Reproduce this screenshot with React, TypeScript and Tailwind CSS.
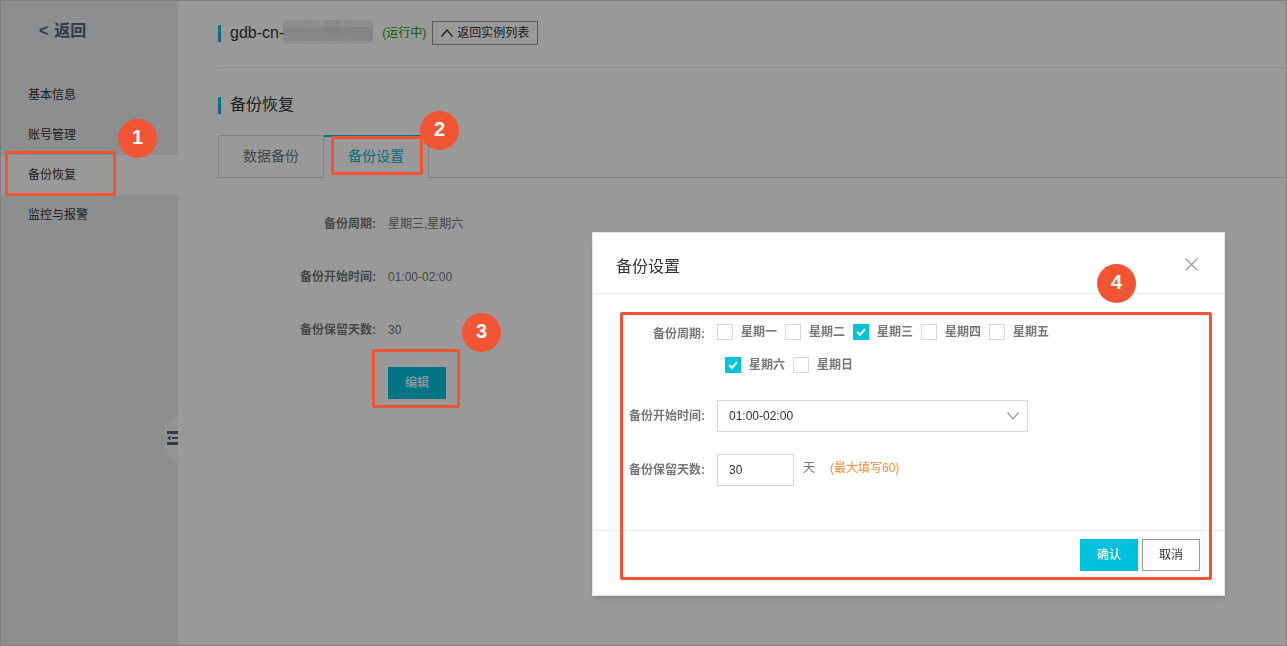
import { useState } from "react";
import type { ReactNode } from "react";

type NavItem = {
  label: string;
  active?: boolean;
};

type DetailRow = {
  label: string;
  value: string;
};

const NAV_ITEMS: NavItem[] = [
  { label: "基本信息" },
  { label: "账号管理" },
  { label: "备份恢复", active: true },
  { label: "监控与报警" },
];

const WEEK_DAYS = ["星期一", "星期二", "星期三", "星期四", "星期五", "星期六", "星期日"];

const TIME_SLOTS = ["00:00-01:00", "01:00-02:00", "02:00-03:00", "03:00-04:00"];

const DETAILS: DetailRow[] = [
  { label: "备份周期:", value: "星期三,星期六" },
  { label: "备份开始时间:", value: "01:00-02:00" },
  { label: "备份保留天数:", value: "30" },
];

// darkness of each cell in the masked instance id
const MASK_ROWS = [
  [10, 12, 12, 11, 11, 10, 13, 14, 11, 11, 10, 10, 10],
  [16, 18, 18, 17, 17, 17, 20, 21, 18, 19, 18, 18, 18],
  [15, 16, 16, 15, 15, 16, 17, 17, 16, 16, 17, 17, 17],
  [6, 7, 7, 6, 6, 6, 7, 7, 6, 6, 5, 5, 5],
];

function Step({ n, className }: { n: number; className: string }) {
  return (
    <span
      className={`absolute z-20 flex h-[39px] w-[39px] items-center justify-center rounded-full bg-[#f25533] pb-1 text-xl leading-5 font-bold text-white ${className}`}
    >
      {n}
    </span>
  );
}

function Frame({ className }: { className: string }) {
  return (
    <span
      className={`pointer-events-none absolute z-20 rounded-xs border-3 border-[#f25533] ${className}`}
    />
  );
}

function Heading({ children }: { children: ReactNode }) {
  return (
    <div className="flex items-center gap-[9px]">
      <span className="h-[17px] w-[3px] bg-linear-to-b from-[#00c1de] from-50% to-[#2aa8e8] to-60%" />
      <h2 className="text-base leading-6 text-[#333]">{children}</h2>
    </div>
  );
}

function MaskedId() {
  return (
    <svg width="90" height="24" viewBox="0 0 90 24" shapeRendering="crispEdges" className="-mt-[2px] -ml-px">
      {MASK_ROWS.map((row, y) =>
        row.map((value, x) => (
          <rect key={`${x}-${y}`} x={x * 7} y={y * 7} width="7" height="7" fill="#1a2424" opacity={value / 120} />
        ))
      )}
    </svg>
  );
}

function Sidebar() {
  return (
    <aside className="relative w-[177px] shrink-0 bg-[#eaedf1]">
      <a href="#" className="mt-[18px] ml-[38px] flex gap-[6px] text-base leading-6 font-bold text-[#546478]">
        <span>&lt;</span>返回
      </a>

      <nav className="mt-8">
        {NAV_ITEMS.map((item) => (
          <div key={item.label} className="relative">
            <a
              href="#"
              className={`block h-10 pl-[27px] text-xs leading-10 text-[#333] ${item.active ? "bg-white" : ""}`}
            >
              {item.label}
            </a>
            {item.active && (
              <>
                <Frame className="-top-1 left-1 h-[45px] w-[111px]" />
                <Step n={1} className="-top-9 left-[117px]" />
              </>
            )}
          </div>
        ))}
      </nav>

      <button type="button" aria-label="收起" className="absolute top-[414px] right-0">
        <svg width="13" height="48" viewBox="0 0 13 48">
          <path d="M13 0 L0 9 V39 L13 48 Z" fill="#f4f5f6" />
          <path d="M2 16h11v3H2zM7 22h6v2H7zM2 27h11v3H2zM5.500 20.500v5L2 23z" fill="#546478" />
        </svg>
      </button>
    </aside>
  );
}

function SettingsDialog() {
  const [days, setDays] = useState<string[]>(["星期三", "星期六"]);
  const [slot, setSlot] = useState("01:00-02:00");
  const [keepDays, setKeepDays] = useState("30");

  function toggleDay(day: string) {
    setDays((prev) => (prev.includes(day) ? prev.filter((d) => d !== day) : [...prev, day]));
  }

  return (
    <div
      role="dialog"
      aria-labelledby="dialog-title"
      className="relative w-[633px] border border-[#e5e5e5] bg-white shadow-md"
    >
      <div className="flex items-start justify-between border-b border-[#ebebeb] pt-[22px] pr-[26px] pb-[14px] pl-[23px]">
        <h3 id="dialog-title" className="text-base leading-6 text-[#333]">
          备份设置
        </h3>
        <button type="button" aria-label="关闭" className="mt-[3px]">
          <svg width="13" height="13" viewBox="0 0 13 13" fill="none" stroke="#999" strokeWidth="1.2">
            <path d="M0.5 0.5l12 12M12.5 0.5l-12 12" />
          </svg>
        </button>
      </div>

      <div className="h-[236px] pt-7 text-xs leading-5 text-[#777]">
        <div className="flex gap-3">
          <span className="w-28 shrink-0 pt-[2px] text-right font-bold">备份周期:</span>
          <div className="flex w-[352px] flex-wrap gap-y-[13px]">
            {WEEK_DAYS.map((day) => (
              <label key={day} className="ml-2 flex items-center gap-2 font-bold first:ml-0">
                <span className="relative h-4 w-4">
                  <input
                    type="checkbox"
                    checked={days.includes(day)}
                    onChange={() => toggleDay(day)}
                    className="peer block h-4 w-4 appearance-none border border-[#d7d8d9] bg-white checked:border-[#00c1de] checked:bg-[#00c1de]"
                  />
                  <svg
                    viewBox="0 0 16 16"
                    fill="none"
                    stroke="#fff"
                    strokeWidth="2"
                    className="pointer-events-none absolute inset-0 hidden peer-checked:block"
                  >
                    <path d="M4.200 8l2.800 2.800 5-5.800" />
                  </svg>
                </span>
                {day}
              </label>
            ))}
          </div>
        </div>

        <div className="mt-[25px] flex items-center gap-3">
          <label htmlFor="slot" className="w-28 shrink-0 text-right font-bold">
            备份开始时间:
          </label>
          <div className="relative">
            <select
              id="slot"
              value={slot}
              onChange={(e) => setSlot(e.target.value)}
              className="block h-8 w-[311px] appearance-none border border-[#d7d8d9] bg-white px-[11px] text-xs text-[#333]"
            >
              {TIME_SLOTS.map((s) => (
                <option key={s}>{s}</option>
              ))}
            </select>
            <svg
              width="12"
              height="8"
              viewBox="0 0 12 8"
              fill="none"
              stroke="#999"
              strokeWidth="1.2"
              className="pointer-events-none absolute top-3 right-[9px]"
            >
              <path d="M0.5 0.5L6 7l5.500-6.500" />
            </svg>
          </div>
        </div>

        <div className="mt-[22px] flex items-center gap-3">
          <label htmlFor="keep-days" className="w-28 shrink-0 text-right font-bold">
            备份保留天数:
          </label>
          <div className="flex">
            <input
              id="keep-days"
              type="text"
              value={keepDays}
              onChange={(e) => setKeepDays(e.target.value)}
              className="h-8 w-[77px] border border-[#d7d8d9] px-[11px] text-xs text-[#333]"
            />
            <span className="mt-1 ml-[9px]">天</span>
            <span className="mt-1 ml-[15px] text-[#ff8a2e]">(最大填写60)</span>
          </div>
        </div>
      </div>

      <div className="flex justify-end gap-1 border-t border-[#ebebeb] pt-2 pr-6 pb-6 text-xs">
        <button type="button" className="h-8 w-[58px] bg-[#00c1de] font-medium text-white">
          确认
        </button>
        <button type="button" className="h-8 w-[58px] border border-[#999] text-[#333]">
          取消
        </button>
      </div>

      <Frame className="top-[79px] right-3 bottom-[15px] left-[27px]" />
      <Step n={4} className="top-[31px] right-[88px]" />
    </div>
  );
}

export default function App() {
  return (
    <div className="flex min-h-screen border border-[#d5d5d5] bg-white font-['Liberation_Sans','Noto_Sans_CJK_SC',sans-serif]">
      <Sidebar />

      <main className="min-w-0 flex-1 pl-10">
        <header className="flex items-center border-b border-[#ececec] pt-5 pb-[22px]">
          <div className="flex h-6 items-center">
            <Heading>gdb-cn-</Heading>
            <MaskedId />
            <span className="ml-[9px] text-xs text-[#00a700]">(运行中)</span>
            <button
              type="button"
              className="ml-[6px] flex h-6 items-center gap-1 border border-[#999] px-2 text-xs text-[#333]"
            >
              <svg width="12" height="8" viewBox="0 0 12 8" fill="none" stroke="#333" strokeWidth="1.3">
                <path d="M0.500 7.500L6 1l5.500 6.500" />
              </svg>
              返回实例列表
            </button>
          </div>
        </header>

        <div className="mt-[25px]">
          <Heading>备份恢复</Heading>
        </div>

        <div role="tablist" className="mt-[18px] flex h-[43px] text-sm">
          <button
            type="button"
            role="tab"
            aria-selected={false}
            className="w-[106px] border border-[#ddd] pb-[2px] text-[#777]"
          >
            数据备份
          </button>
          <div className="relative w-[105px]">
            <button
              type="button"
              role="tab"
              aria-selected={true}
              className="h-full w-full border-t-2 border-r border-t-[#00c1de] border-r-[#ddd] pb-1 text-[#00c1de]"
            >
              备份设置
            </button>
            <Frame className="top-[1px] left-[7px] h-[39px] w-[92px]" />
            <Step n={2} className="-top-6 left-24" />
          </div>
          <div className="flex-1 border-b border-[#ddd]" />
        </div>

        <dl className="mt-9 space-y-[33px] text-xs leading-5 text-[#777]">
          {DETAILS.map((row) => (
            <div key={row.label} className="flex gap-3">
              <dt className="w-[158px] text-right font-bold">{row.label}</dt>
              <dd>{row.value}</dd>
            </div>
          ))}
        </dl>

        <div className="relative mt-[27px] ml-[170px] w-[58px]">
          <button type="button" className="block h-8 w-full bg-[#00c1de] text-xs font-medium text-white">
            编辑
          </button>
          <Frame className="-top-[18px] -left-4 h-[59px] w-[88px]" />
          <Step n={3} className="-top-[54px] left-[74px]" />
        </div>
      </main>

      <div className="fixed inset-0 z-10 flex items-start justify-end bg-black/40 pt-[232px] pr-[62px]">
        <SettingsDialog />
      </div>
    </div>
  );
}
